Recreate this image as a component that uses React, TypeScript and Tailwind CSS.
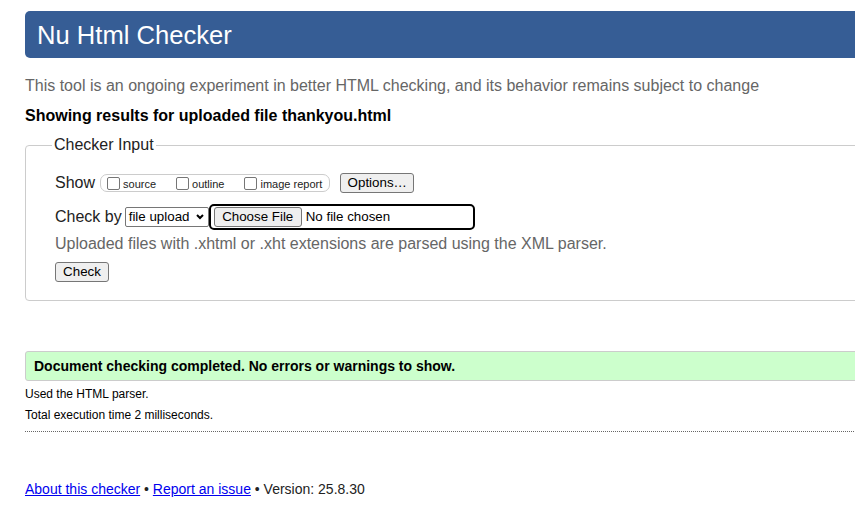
import React from 'react';

const font = { fontFamily: '"Liberation Sans", Arial, sans-serif' };

const Box = ({ label }: { label: string }) => (
  <label className="flex items-center">
    <span className="w-[13px] h-[13px] border border-[#767676] rounded-[2px] bg-white" />
    <span className="ml-[3px] text-[11px] leading-[13px] mt-[3px]">{label}</span>
  </label>
);

const NativeButton = ({ children, className = '' }: { children: React.ReactNode; className?: string }) => (
  <button
    className={`h-[20px] px-[6px] bg-[#efefef] border border-[#767676] rounded-[3px] text-[13.33px] leading-[16px] text-black ${className}`}
  >
    {children}
  </button>
);

export default function App() {
  return (
    <div className="w-[855px] h-[525px] overflow-hidden bg-white text-[#222]" style={font}>
      <div className="w-[920px] pl-[25px]">
        {/* header */}
        <div className="mt-[11px] h-[47px] bg-[#365d95] rounded-[5px] pl-[12px] flex items-center">
          <h1 className="text-[25.6px] leading-[30px] text-white font-normal">Nu Html Checker</h1>
        </div>

        <p className="mt-[19px] text-[16px] leading-[18px] text-[#666]">
          This tool is an ongoing experiment in better HTML checking, and its behavior remains subject to change
        </p>
        <p className="mt-[12px] text-[16px] leading-[18px] font-bold text-black">
          Showing results for uploaded file thankyou.html
        </p>

        {/* checker input */}
        <fieldset className="mt-[11px] border border-[#ccc] rounded-[4px] pl-[29px] pt-[19px] pb-[17px]">
          <legend className="-ml-[3px] px-[2px] text-[16px] leading-[18px] text-[#222]">Checker Input</legend>

          <div className="flex items-center h-[20px]">
            <span className="text-[16px] leading-[18px]">Show</span>
            <div className="ml-[5px] h-[18px] border border-[#ccc] rounded-[7px] flex items-center pl-[6px] pr-[7px]">
              <Box label="source" />
              <span className="w-[20px]" />
              <Box label="outline" />
              <span className="w-[20px]" />
              <Box label="image report" />
            </div>
            <NativeButton className="ml-[10px] w-[74px]">Options…</NativeButton>
          </div>

          <div className="mt-[11px] flex items-center h-[26px]">
            <span className="text-[16px] leading-[18px]">Check by</span>
            <div className="ml-[3px] w-[84px] h-[20px] border border-[#767676] rounded-[2px] flex items-center justify-between pl-[3px] pr-[4px] text-[13.33px] text-black bg-white">
              <span>file upload</span>
              <svg width="8" height="6" viewBox="0 0 8 6">
                <polyline points="1,1 4,4 7,1" fill="none" stroke="#000" strokeWidth="2" />
              </svg>
            </div>
            <div className="w-[266px] h-[26px] border-2 border-black rounded-[5px] flex items-center pl-[3px]">
              <NativeButton className="w-[88px]">Choose File</NativeButton>
              <span className="ml-[4px] text-[13.33px] text-black">No file chosen</span>
            </div>
          </div>

          <p className="mt-[5px] text-[16px] leading-[18px] text-[#666]">
            Uploaded files with .xhtml or .xht extensions are parsed using the XML parser.
          </p>

          <NativeButton className="mt-[9px] w-[54px]">Check</NativeButton>
        </fieldset>

        {/* result */}
        <div className="mt-[50px] h-[30px] border border-[#ccc] rounded-[3px] bg-[#ccffcc] flex items-center pl-[8px]">
          <span className="text-[14px] leading-[16px] font-bold text-black">
            Document checking completed. No errors or warnings to show.
          </span>
        </div>

        <div className="border-b border-dotted border-[#666] pb-[9px] text-[12px] leading-[14px] text-black">
          <p className="mt-[6px]">Used the HTML parser.</p>
          <p className="mt-[7px]">Total execution time 2 milliseconds.</p>
        </div>

        <p className="mt-[49px] text-[14px] leading-[16px] text-[#222]">
          <a href="#" className="text-[#00e] underline">About this checker</a>
          {' • '}
          <a href="#" className="text-[#00e] underline">Report an issue</a>
          {' • Version: 25.8.30'}
        </p>
      </div>
    </div>
  );
}
